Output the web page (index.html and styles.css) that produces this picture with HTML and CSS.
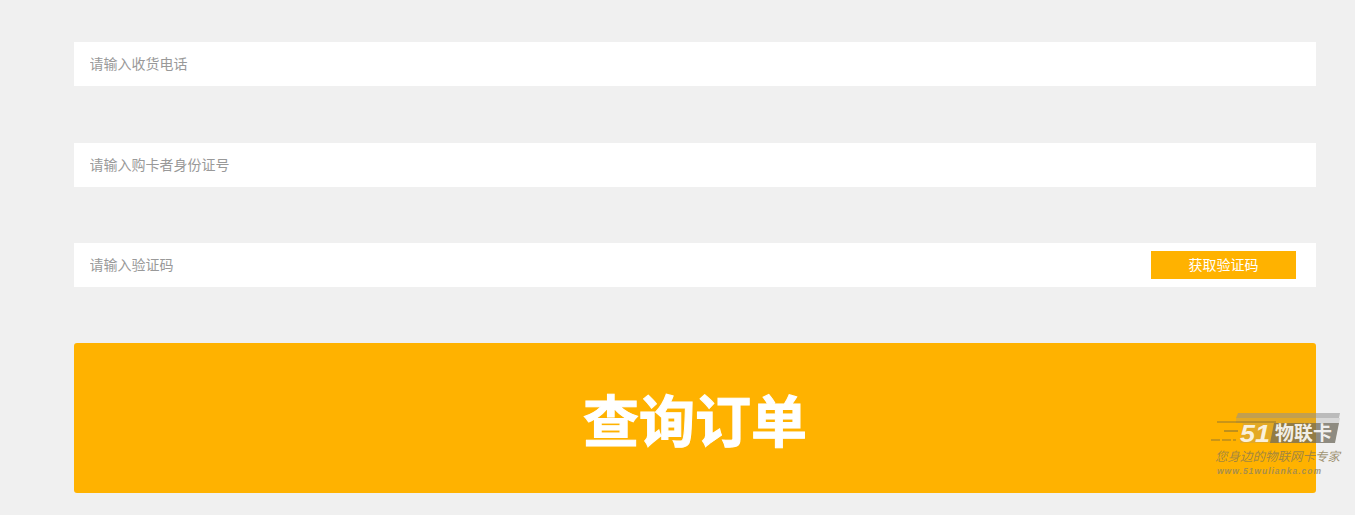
FILE: index.html
```html
<!DOCTYPE html>
<html lang="zh-CN">
<head>
    <meta charset="UTF-8">
    <meta name="viewport" content="width=device-width, initial-scale=1.0">
    <title>查询订单</title>
    <link rel="stylesheet" href="styles.css">
</head>
<body>
    <form class="query-form">
        <div class="form-row">
            <input class="form-input" type="text" placeholder="请输入收货电话">
        </div>
        <div class="form-row">
            <input class="form-input" type="text" placeholder="请输入购卡者身份证号">
        </div>
        <div class="form-row">
            <input class="form-input" type="text" placeholder="请输入验证码">
            <button class="code-btn" type="button">获取验证码</button>
        </div>
        <button class="submit-btn" type="button">查询订单</button>
    </form>

    <!-- 水印 -->
    <svg class="watermark" width="140" height="72" viewBox="1205 408 140 72">
        <path d="M1238 413H1340L1339 418H1236z" fill="#8f8f8f" fill-opacity="0.55"/>
        <path d="M1236 418H1340L1339 423H1274L1270 443H1240L1243 423H1236z" fill="#8f8f8f" fill-opacity="0.25"/>
        <path d="M1274 423H1339L1335 443H1270z" fill="#6e6a5c" fill-opacity="0.75"/>
        <path d="M1217 422H1276" stroke="#7a6a3a" stroke-opacity="0.8" stroke-width="1" fill="none"/>
        <path d="M1224 431H1238" stroke="#7a6a3a" stroke-opacity="0.8" stroke-width="1.2" fill="none"/>
        <path d="M1211 440H1236" stroke="#7a6a3a" stroke-opacity="0.8" stroke-width="1.2" stroke-dasharray="9 2" fill="none"/>
        <text class="mark-num" x="1240" y="442" textLength="30" lengthAdjust="spacingAndGlyphs">51</text>
        <text class="mark-name" x="1275" y="440">物联卡</text>
        <text class="mark-slogan" x="1215" y="461">您身边的物联网卡专家</text>
        <text class="mark-url" x="1217" y="474">www.51wulianka.com</text>
    </svg>
</body>
</html>
```

FILE: styles.css
```css
html, body {
    margin: 0;
    padding: 0;
}
body {
    background-color: #f0f0f0;
    font-family: "Noto Sans CJK SC", "Liberation Sans", sans-serif;
    position: relative;
    height: 515px;
    overflow: hidden;
}
.query-form {
    display: flex;
    flex-direction: column;
    gap: 56px;
    padding: 42px 39px 22px 74px;
}
.form-row {
    display: flex;
    align-items: center;
    height: 44px;
    padding: 0 20px 0 16px;
    background-color: #fff;
}
.form-row:first-child {
    margin-bottom: 1px;
}
.form-input {
    flex: 1;
    min-width: 0;
    padding: 0 0 2px;
    margin-left: -0.5px;
    border: 0;
    outline: 0;
    background: none;
    font-family: inherit;
    font-size: 14px;
    color: #333;
}
.form-input::placeholder {
    color: #999;
    opacity: 1;
}
.code-btn {
    width: 145px;
    height: 28px;
    padding: 0 0 2px;
    border: 0;
    background-color: #ffb200;
    color: #fff;
    font-family: inherit;
    font-size: 14px;
    cursor: pointer;
}
.submit-btn {
    height: 150px;
    padding: 0 0 2px;
    border: 0;
    border-radius: 3px;
    background-color: #ffb200;
    color: #fff;
    font-family: inherit;
    font-size: 56px;
    font-weight: 700;
    -webkit-text-stroke: 1px #fff;
    cursor: pointer;
}
.watermark {
    position: absolute;
    left: 1205px;
    top: 408px;
}
.mark-num {
    font-family: "Liberation Sans", sans-serif;
    font-size: 24px;
    font-weight: 700;
    font-style: italic;
    fill: #fff;
    fill-opacity: 0.85;
}
.mark-name {
    font-size: 19px;
    font-weight: 700;
    fill: #fff;
    fill-opacity: 0.9;
}
.mark-slogan {
    font-size: 12.5px;
    font-style: italic;
    fill: #8a7a50;
    fill-opacity: 0.8;
}
.mark-url {
    font-family: "Liberation Sans", sans-serif;
    font-size: 8.5px;
    font-weight: 700;
    font-style: italic;
    letter-spacing: 1px;
    fill: #8f8562;
    fill-opacity: 0.8;
}
```
